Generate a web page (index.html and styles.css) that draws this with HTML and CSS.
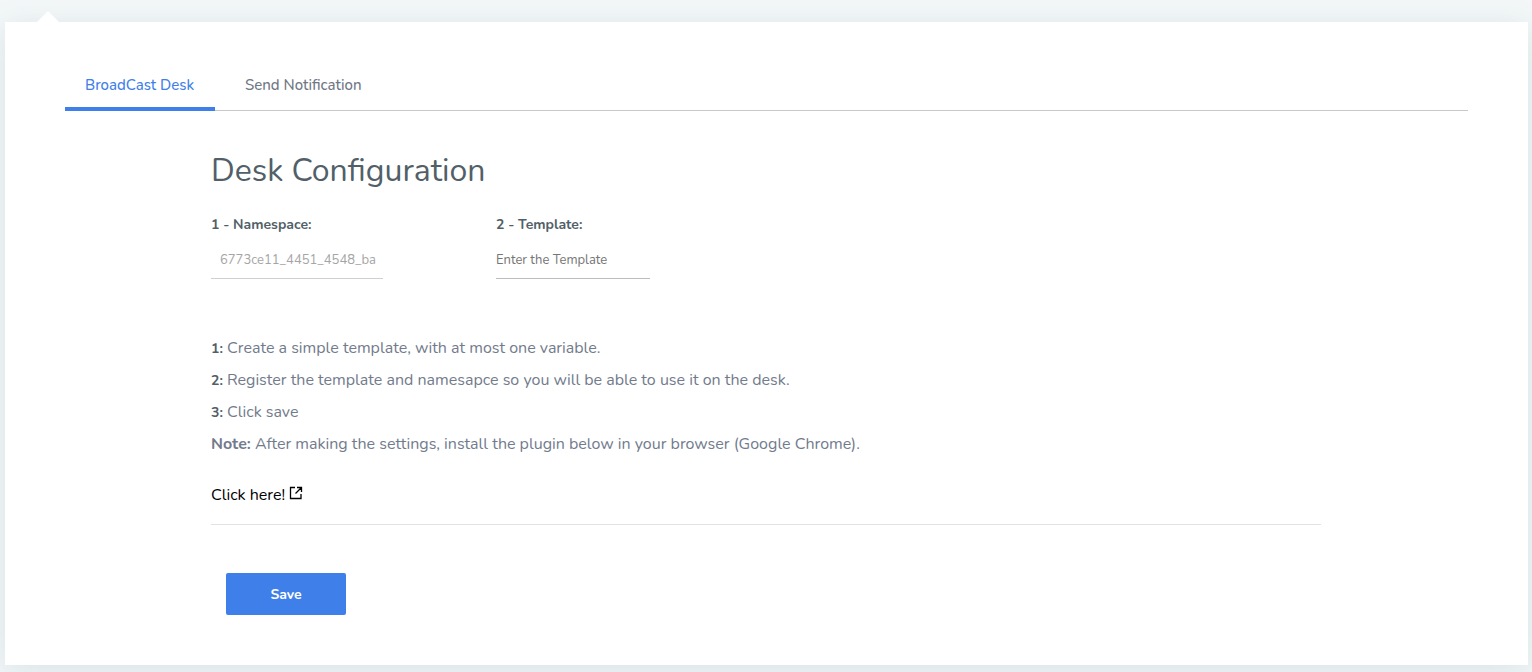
FILE: index.html
```html
<!DOCTYPE html>
<html lang="en">
<head>
<meta charset="utf-8">
<title>Desk Configuration</title>
<link rel="stylesheet" href="styles.css">
</head>
<body>
<main class="card">
  <nav class="tabs">
    <a class="tab active" href="#desk">BroadCast Desk</a>
    <a class="tab" href="#notify">Send Notification</a>
  </nav>
  <form class="config" id="desk">
    <h1>Desk Configuration</h1>
    <div class="fields">
      <div class="field namespace">
        <label for="ns">1 - Namespace:</label>
        <input id="ns" type="text" value="6773ce11_4451_4548_ba" disabled>
      </div>
      <div class="field">
        <label for="tpl">2 - Template:</label>
        <input id="tpl" type="text" placeholder="Enter the Template">
      </div>
    </div>
    <div class="steps">
      <p><b>1:</b> Create a simple template, with at most one variable.</p>
      <p><b>2:</b> Register the template and namesapce so you will be able to use it on the desk.</p>
      <p><b>3:</b> Click save</p>
      <p class="note"><b>Note:</b> After making the settings, install the plugin below in your browser (Google Chrome).</p>
    </div>
    <div class="plugin">
      <a href="#plugin">Click here!
        <svg viewBox="0 0 14 14" width="14" height="14" aria-hidden="true"><path d="M6 1.5H1.5v11H12V8M8 1.5h4.5V6M12.25 1.75 6.5 7.5" fill="none" stroke="currentColor" stroke-width="1.3"/></svg>
      </a>
    </div>
    <button class="save" type="button">Save</button>
  </form>
</main>
</body>
</html>
```
FILE: styles.css
```css
* { box-sizing: border-box; }
body {
  margin: 0;
  padding: 22px 4px 7px 5px;
  background: #f3f7f8;
  color: #727b8c;
  font-family: Nunito, "Open Sans", sans-serif;
  font-size: 16px;
}
.card {
  position: relative;
  padding: 38px 60px 50px;
  background: #fff;
  box-shadow: 0 6px 30px rgba(90, 130, 150, 0.16);
}
.card::before {
  content: "";
  position: absolute;
  top: -11px;
  left: 32px;
  border: 11px solid transparent;
  border-top: 0;
  border-bottom-color: #fff;
}
.tabs { display: flex; gap: 10px; border-bottom: 1px solid #c8c8c8; }
.tab {
  min-width: 150px;
  height: 51px;
  margin-bottom: -1px;
  padding: 0 20px;
  color: #6f7885;
  font-size: 15px;
  font-weight: 500;
  line-height: 50px;
  text-decoration: none;
}
.tab.active {
  border-bottom: 4px solid #3f7fea;
  color: #3f7fea;
}
.config { padding: 37px 147px 0 146px; }
h1 {
  margin: 0;
  color: #525f69;
  font-size: 32px;
  font-weight: 400;
  line-height: 46px;
}
.fields { display: flex; gap: 113px; padding-top: 19px; }
.field { display: flex; flex-direction: column; width: 154px; }
.namespace { width: 172px; }
label { color: #525f69; font-size: 14px; font-weight: 700; line-height: 24px; }
input {
  width: 100%;
  height: 42px;
  padding: 5px 0 0;
  border: 0;
  border-bottom: 1px solid #bdbdbd;
  background: none;
  font: 13px Nunito, "Open Sans", sans-serif;
}
.namespace input { padding-left: 9px; border-color: #d0d0d0; color: #a5a5a5; }
.steps { padding-top: 53px; }
.steps p { margin: 0; line-height: 32px; }
.steps b { color: #525f69; font-size: 14px; line-height: 1; }
.steps .note b { color: #727b8c; font-size: 16px; }
.plugin { padding: 25px 0 19px; border-bottom: 1px solid #e2e2e2; line-height: 20px; }
.plugin a { color: #000; text-decoration: none; }
.save {
  display: block;
  width: 120px;
  height: 42px;
  margin: 48px 0 0 15px;
  border: 0;
  border-radius: 2px;
  background: #3f7fea;
  color: #fff;
  font: 700 14px Nunito, "Open Sans", sans-serif;
}
```
